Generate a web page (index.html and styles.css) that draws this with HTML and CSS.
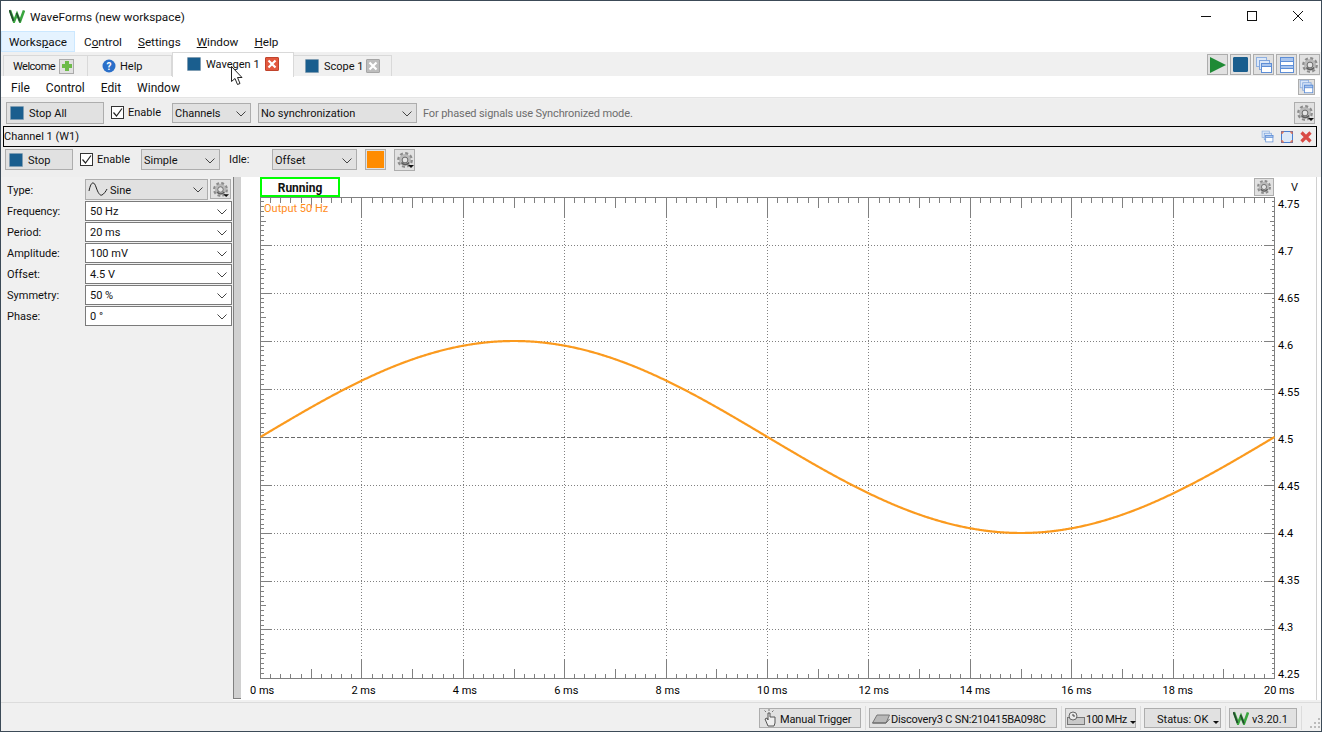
FILE: index.html
```html
<!DOCTYPE html>
<html>
<head>
  <title>WaveForms (new workspace)</title>
  <link rel="stylesheet" href="styles.css">
</head>
<body>
  <svg class="defs" width="0" height="0">
    <symbol id="logo" viewBox="0 0 16 14">
      <path d="M1 1.5 L5 12.5 L8 5 L11 12.5 L15 1.5" fill="none" stroke="#3aa63f" stroke-width="2.6"/>
      <path d="M0.5 1 L4.5 12 M7.5 4 L11 12.5" fill="none" stroke="#24492f" stroke-width="1.7"/>
    </symbol>
    <symbol id="gear" viewBox="0 0 18 18">
      <circle cx="9" cy="9" r="6" fill="#b9b9b9"/>
      <circle cx="9" cy="9" r="6.8" fill="none" stroke="#8c8c8c" stroke-width="2.2" stroke-dasharray="3 2.34"/>
      <circle cx="9" cy="9" r="2.9" fill="#e4e4e4" stroke="#6a6a6a"/>
      <path d="M5.5 11.5 A4.4 4.4 0 0 0 13 11.5" fill="none" stroke="#5c5c5c" stroke-width="1.5"/>
    </symbol>
    <symbol id="gear-menu" viewBox="0 0 18 18">
      <use href="#gear"/>
      <path d="M12 14 H18 L15 17 Z" fill="#111"/>
    </symbol>
    <symbol id="stack" viewBox="0 0 18 18">
      <rect x="1.5" y="1.5" width="10" height="9" fill="#dce8f8" stroke="#8fb0e0"/>
      <rect x="4.5" y="4.5" width="10" height="9" fill="#dce8f8" stroke="#7fa4dc"/>
      <rect x="6.5" y="7.5" width="10" height="9" fill="#fff" stroke="#5e8ed6"/>
      <rect x="6.5" y="7.5" width="10" height="3" fill="#a9c5ee" stroke="#5e8ed6"/>
    </symbol>
    <symbol id="chev" viewBox="0 0 10 6">
      <path d="M0.5 0.5 L5 5 L9.5 0.5" fill="none" stroke="#444" stroke-width="1"/>
    </symbol>
    <symbol id="x-mark" viewBox="0 0 10 10">
      <path d="M1.5 1.5 L8.5 8.5 M8.5 1.5 L1.5 8.5" fill="none" stroke="#fff" stroke-width="2.2"/>
    </symbol>
  </svg>

  <div class="window">
    <div class="titlebar">
      <svg class="logo"><use href="#logo"/></svg>
      <span class="title-text">WaveForms (new workspace)</span>
      <div class="win-controls">
        <svg width="46" height="30"><path d="M18 15.5 H28" stroke="#111"/></svg>
        <svg width="46" height="30"><rect x="18.5" y="10.5" width="9" height="9" fill="none" stroke="#111"/></svg>
        <svg width="46" height="30"><path d="M18 10 L28 20 M28 10 L18 20" stroke="#111"/></svg>
      </div>
    </div>

    <div class="menubar">
      <span class="menu-item active">Works<u>p</u>ace</span>
      <span class="menu-item">C<u>o</u>ntrol</span>
      <span class="menu-item"><u>S</u>ettings</span>
      <span class="menu-item"><u>W</u>indow</span>
      <span class="menu-item"><u>H</u>elp</span>
    </div>

    <div class="tabbar">
      <div class="tab tab-welcome">
        <span class="tab-label">Welcome</span>
        <span class="tab-box">
          <svg width="12" height="12"><path d="M6 1 V11 M1 6 H11" stroke="#6dbb4a" stroke-width="4"/></svg>
        </span>
      </div>
      <div class="tab tab-help">
        <svg width="14" height="14"><circle cx="7" cy="7" r="6.5" fill="#2a6fc9"/><text x="7" y="10.5" class="help-q">?</text></svg>
        <span>Help</span>
      </div>
      <div class="tab tab-wavegen current">
        <span class="square"></span>
        <span class="tab-label">Wavegen 1</span>
        <span class="tab-close red"><svg width="10" height="10"><use href="#x-mark"/></svg></span>
      </div>
      <div class="tab tab-scope">
        <span class="square"></span>
        <span class="tab-label">Scope 1</span>
        <span class="tab-close grey"><svg width="10" height="10"><use href="#x-mark"/></svg></span>
      </div>
      <div class="tab-tools">
        <button class="icon-btn"><svg width="16" height="16"><path d="M0 0 L16 8 L0 16 Z" fill="#1f8a35"/></svg></button>
        <button class="icon-btn"><span class="square big"></span></button>
        <button class="icon-btn"><svg width="18" height="18"><use href="#stack"/></svg></button>
        <button class="icon-btn">
          <svg width="14" height="16"><rect x="0.5" y="0.5" width="13" height="15" fill="#fff" stroke="#5e8ed6"/><rect x="0.5" y="0.5" width="13" height="4" fill="#a9c5ee" stroke="#5e8ed6"/><rect x="0.5" y="8.5" width="13" height="3" fill="#a9c5ee" stroke="#5e8ed6"/></svg>
        </button>
        <button class="icon-btn"><svg width="18" height="18"><use href="#gear"/></svg></button>
      </div>
    </div>

    <div class="submenu">
      <span>File</span>
      <span>Control</span>
      <span>Edit</span>
      <span>Window</span>
      <button class="icon-btn small"><svg width="15" height="15"><use href="#stack"/></svg></button>
    </div>

    <div class="toolbar">
      <button class="btn stop-all"><span class="square"></span>Stop All</button>
      <label class="check check-all"><span class="box"><svg width="11" height="11"><path d="M1.5 5.5 L4.5 9 L10 1.5" fill="none" stroke="#222" stroke-width="1.2"/></svg></span>Enable</label>
      <div class="combo combo-channels">Channels<svg class="chev"><use href="#chev"/></svg></div>
      <div class="combo combo-sync">No synchronization<svg class="chev"><use href="#chev"/></svg></div>
      <span class="hint">For phased signals use Synchronized mode.</span>
      <button class="icon-btn tall"><svg width="18" height="18"><use href="#gear-menu"/></svg></button>
    </div>

    <div class="channel-bar">
      <span>Channel 1 (W1)</span>
      <div class="channel-icons">
        <svg width="13" height="13"><use href="#stack"/></svg>
        <svg width="12" height="12"><rect x="0.5" y="0.5" width="11" height="11" fill="#dce8f8" stroke="#4a7fd0"/><path d="M1 3 V1 H3 M9 1 H11 V3 M11 9 V11 H9 M3 11 H1 V9" fill="none" stroke="#e2603c" stroke-width="1.2"/></svg>
        <svg width="12" height="12"><path d="M1.5 1.5 L10.5 10.5 M10.5 1.5 L1.5 10.5" stroke="#d94b45" stroke-width="3.2"/></svg>
      </div>
    </div>

    <div class="channel-tools">
      <button class="btn stop"><span class="square"></span>Stop</button>
      <label class="check check-one"><span class="box"><svg width="11" height="11"><path d="M1.5 5.5 L4.5 9 L10 1.5" fill="none" stroke="#222" stroke-width="1.2"/></svg></span>Enable</label>
      <div class="combo combo-mode">Simple<svg class="chev"><use href="#chev"/></svg></div>
      <span class="idle-label">Idle:</span>
      <div class="combo combo-idle">Offset<svg class="chev"><use href="#chev"/></svg></div>
      <button class="swatch-btn"><span class="swatch"></span></button>
      <button class="icon-btn tall"><svg width="18" height="18"><use href="#gear-menu"/></svg></button>
    </div>

    <div class="main">
      <div class="sidebar">
        <div class="type-row">
          <span>Type:</span>
          <div class="combo combo-type">
            <svg width="20" height="16"><path d="M1 10 C3 0 6 0 8 6 C10 12 12 15 14 14 C16 13 18 10 19 8" fill="none" stroke="#222"/></svg>
            <span>Sine</span>
            <svg class="chev"><use href="#chev"/></svg>
          </div>
          <button class="icon-btn type-gear"><svg width="17" height="17"><use href="#gear-menu"/></svg></button>
        </div>
        <div class="param"><span>Frequency:</span><div class="field">50 Hz<svg class="chev"><use href="#chev"/></svg></div></div>
        <div class="param"><span>Period:</span><div class="field">20 ms<svg class="chev"><use href="#chev"/></svg></div></div>
        <div class="param"><span>Amplitude:</span><div class="field">100 mV<svg class="chev"><use href="#chev"/></svg></div></div>
        <div class="param"><span>Offset:</span><div class="field">4.5 V<svg class="chev"><use href="#chev"/></svg></div></div>
        <div class="param"><span>Symmetry:</span><div class="field">50 %<svg class="chev"><use href="#chev"/></svg></div></div>
        <div class="param"><span>Phase:</span><div class="field">0 °<svg class="chev"><use href="#chev"/></svg></div></div>
      </div>
      <div class="splitter"></div>
      <div class="plot-pane">
        <div class="plot-head">
          <div class="running">Running</div>
          <button class="icon-btn plot-gear"><svg width="16" height="16"><use href="#gear"/></svg></button>
          <span class="unit">V</span>
        </div>
        <svg id="plot" class="plot" viewBox="241 197 1075 503" width="1075" height="503"></svg>
      </div>
    </div>

    <div class="statusbar">
      <button class="btn status-btn st-trigger">
        <svg width="14" height="18"><path d="M5 17 L2 10 L4 9 L5 11 V4 H7 V8 H12 V14 L11 17 Z" fill="#eee" stroke="#555"/><path d="M3 3 L1.5 1.5 M6 2 V0 M9 3 L10.5 1.5" stroke="#777"/></svg>
        <span class="status-text">Manual Trigger</span>
      </button>
      <i class="sep"></i>
      <button class="btn status-btn st-device">
        <svg width="18" height="12"><path d="M0.5 11 L5 3 H17.5 L14 11 Z" fill="#b9b9b9" stroke="#777"/><path d="M0.5 11 H14 L17.5 7" fill="none" stroke="#666"/></svg>
        <span class="status-text">Discovery3 C SN:210415BA098C</span>
      </button>
      <i class="sep"></i>
      <button class="btn status-btn st-clock">
        <svg width="18" height="14"><rect x="0.5" y="6.5" width="17" height="7" fill="#c9c9c9" stroke="#777"/><circle cx="6" cy="5" r="4" fill="#e8e8e8" stroke="#666"/><path d="M6 3 V5 H8" fill="none" stroke="#444"/></svg>
        <span class="status-text">100 MHz</span><b class="drop"></b>
      </button>
      <i class="sep"></i>
      <button class="btn status-btn st-state"><span class="status-text">Status: OK</span><b class="drop"></b></button>
      <i class="sep"></i>
      <button class="btn status-btn st-version"><svg class="logo"><use href="#logo"/></svg><span class="status-text">v3.20.1</span></button>
      <i class="sep"></i>
      <svg class="grip" width="10" height="10"><path d="M8 0h2v2H8zM4 4h2v2H4zM8 4h2v2H8zM0 8h2v2H0zM4 8h2v2H4zM8 8h2v2H8z" fill="#bbb"/></svg>
    </div>

    <svg class="cursor" width="14" height="20"><path d="M0.5 0.5 V15.5 L4 12.5 L6.5 18.5 L9 17.5 L6.5 11.5 H11 Z" fill="#fff" stroke="#222"/></svg>
  </div>

  <script src="plot.js"></script>
</body>
</html>
```

FILE: styles.css
```css
* {
  box-sizing: border-box;
}
body {
  margin: 0;
  font-family: Roboto, "Noto Sans", sans-serif;
  font-size: 11px;
  color: #111;
  background-color: #fff;
  overflow: hidden;
}
button {
  font: inherit;
  color: inherit;
  padding: 0;
}
svg {
  flex-shrink: 0;
}
.defs {
  position: absolute;
}
.window {
  position: relative;
  width: 1322px;
  height: 732px;
  border: 1px solid #3c4a57;
  display: flex;
  flex-direction: column;
  background-color: #f0f0f0;
}

/* title and menus */
.titlebar {
  height: 30px;
  background-color: #fff;
  display: flex;
  align-items: center;
  padding-left: 8px;
}
.logo {
  width: 16px;
  height: 14px;
}
.title-text {
  margin-left: 5px;
  padding-top: 2px;
  font-size: 11.8px;
}
.win-controls {
  margin-left: auto;
  display: flex;
}
.menubar {
  height: 21px;
  background-color: #fff;
  display: flex;
  align-items: center;
}
.menu-item {
  height: 21px;
  line-height: 22px;
  padding: 0 8px;
  font-size: 11.7px;
}
.menu-item.active {
  background-color: #e5f3ff;
  border: 1px solid #cce8ff;
  padding: 0 7px;
  line-height: 20px;
  margin-right: 1px;
}

/* tabs */
.tabbar {
  height: 24px;
  display: flex;
  padding-left: 2px;
  position: relative;
}
.tab {
  display: flex;
  align-items: center;
  border-right: 1px solid #d9d9d9;
  background-color: #f0f0f0;
  margin-top: 3px;
  border-top: 1px solid #d9d9d9;
  border-left: 1px solid #d9d9d9;
  height: 21px;
  white-space: nowrap;
}
.tab-label {
  flex-grow: 1;
}
.tab-welcome {
  width: 85px;
  padding-left: 9px;
  padding-right: 13px;
  letter-spacing: -0.5px;
}
.tab-help {
  width: 84px;
  padding-left: 14px;
  gap: 4px;
  border-left: 0;
}
.tab-wavegen {
  width: 122px;
  padding-left: 14px;
  padding-right: 14px;
}
.tab-scope {
  width: 98px;
  padding-left: 11px;
  padding-right: 11px;
  border-left: 0;
}
.tab.current {
  margin-top: 0;
  height: 25px;
  background-color: #fff;
  position: relative;
  z-index: 1;
  padding-bottom: 2px;
}
.help-q {
  font-size: 10px;
  font-weight: bold;
  fill: #fff;
  text-anchor: middle;
}
.tab-box {
  width: 15px;
  height: 15px;
  border: 1px solid #aaa;
  background-color: #e1e1e1;
  display: flex;
  align-items: center;
  justify-content: center;
}
.square {
  display: inline-block;
  width: 14px;
  height: 14px;
  background-color: #1a5e8e;
  border: 1px solid #7f9db3;
  border-radius: 1px;
}
.square.big {
  width: 15px;
  height: 15px;
  border-color: #1a5e8e;
}
.tab .square {
  margin-right: 5px;
}
.tab-close {
  width: 14px;
  height: 14px;
  border-radius: 1px;
  display: flex;
  align-items: center;
  justify-content: center;
}
.tab-close.red {
  background-color: #e2583e;
  border: 1px solid #c0432c;
}
.tab-close.grey {
  background-color: #bdbdbd;
  border: 1px solid #a5a5a5;
}
.tab-tools {
  margin-left: auto;
  margin-right: 1px;
  display: flex;
  gap: 2px;
  padding-top: 2px;
}
.icon-btn {
  width: 21px;
  height: 21px;
  background-color: #e1e1e1;
  border: 1px solid #adadad;
  display: flex;
  align-items: center;
  justify-content: center;
}
.icon-btn.small {
  width: 17px;
  height: 16px;
}
.icon-btn.tall {
  height: 22px;
}

/* inner menu */
.submenu {
  height: 22px;
  background-color: #fff;
  display: flex;
  align-items: center;
  padding-left: 10px;
  padding-right: 5px;
  padding-top: 2px;
  gap: 16px;
  font-size: 12px;
  border-bottom: 1px solid #e4e4e4;
  margin-right: 1px;
}
.submenu .icon-btn {
  margin-left: auto;
  margin-top: -2px;
}

/* toolbars */
.toolbar {
  height: 27px;
  margin-top: 1px;
  display: flex;
  align-items: center;
  padding-left: 5px;
  background-color: #eee;
}
.btn {
  background-color: #e1e1e1;
  border: 1px solid #adadad;
  display: flex;
  align-items: center;
}
.stop-all {
  width: 98px;
  height: 22px;
  padding: 2px 0 0 3px;
  gap: 5px;
}
.btn .square {
  margin-top: -2px;
}
.check {
  display: flex;
  align-items: center;
  gap: 4px;
}
.box {
  width: 13px;
  height: 13px;
  border: 1px solid #333;
  background-color: #fff;
  display: flex;
  align-items: center;
  justify-content: center;
}
.check-all {
  margin-left: 7px;
  width: 61px;
}
.combo {
  height: 20px;
  background-color: #e1e1e1;
  border: 1px solid #adadad;
  display: flex;
  align-items: center;
  padding: 2px 0 0 2px;
}
.chev {
  width: 10px;
  height: 6px;
  margin-left: auto;
  margin-right: 4px;
}
.combo-channels {
  width: 79px;
}
.combo-sync {
  width: 159px;
  margin-left: 7px;
}
.hint {
  margin-left: 6px;
  padding-top: 2px;
  color: #6d6d6d;
  letter-spacing: -0.12px;
}
.toolbar .icon-btn {
  margin-left: auto;
  margin-right: 6px;
}
.channel-bar {
  height: 21px;
  margin-left: 2px;
  margin-right: 4px;
  border: 1px solid #000;
  display: flex;
  align-items: center;
  background-color: #eee;
}
.channel-icons {
  margin-left: auto;
  margin-right: 4px;
  display: flex;
  align-items: center;
  gap: 7px;
}
.channel-tools {
  height: 30px;
  display: flex;
  align-items: flex-start;
  padding-left: 4px;
  padding-top: 2px;
  background-color: #eee;
}
.channel-tools > * {
  height: 21px;
}
.channel-tools .idle-label {
  line-height: 21px;
}
.stop {
  width: 68px;
  padding: 2px 0 0 3px;
  gap: 5px;
}
.check-one {
  margin-left: 7px;
  width: 61px;
}
.combo-mode {
  width: 79px;
}
.idle-label {
  margin-left: 9px;
  width: 43px;
}
.combo-idle {
  width: 85px;
}
.swatch-btn {
  width: 21px;
  margin-left: 8px;
  border: 1px solid #adadad;
  background-color: #e1e1e1;
  display: flex;
  align-items: center;
  justify-content: center;
}
.swatch {
  width: 17px;
  height: 17px;
  background-color: #ff8c00;
}
.channel-tools .icon-btn {
  margin-left: 8px;
}

/* main area */
.main {
  height: 523px;
  display: flex;
  background-color: #fff;
}
.sidebar {
  width: 232px;
  background-color: #f0f0f0;
  padding: 1px 0 0 6px;
}
.type-row {
  display: grid;
  grid-template-columns: 78px 123px 21px;
  align-items: center;
  height: 22px;
}
.type-row > span,
.param > span {
  padding-top: 2px;
}
.combo-type {
  height: 21px;
  gap: 2px;
}
.combo-type svg:first-child {
  margin-top: -2px;
}
.type-gear {
  margin-left: 2px;
  height: 20px;
}
.param {
  display: grid;
  grid-template-columns: 78px 147px;
  height: 21px;
  align-items: center;
}
.field {
  height: 20px;
  background-color: #fff;
  border: 1px solid #7a7a7a;
  display: flex;
  align-items: center;
  padding: 2px 0 0 4px;
}
.splitter {
  width: 8px;
  height: 522px;
  background-color: #d0d0d0;
  border: 1px solid #808080;
  border-top: 0;
  border-right: 0;
}
.plot-pane {
  width: 1076px;
  border-right: 1px solid #d0d0d0;
}
.plot-head {
  height: 20px;
  display: flex;
  align-items: flex-start;
  padding-left: 19px;
}
.running {
  width: 80px;
  height: 20px;
  line-height: 18px;
  border: 2px solid #00ff00;
  text-align: center;
  font-weight: bold;
  font-size: 12px;
}
.plot-gear {
  margin-left: 914px;
  margin-top: 1px;
  width: 20px;
  height: 18px;
}
.unit {
  margin-left: 17px;
  line-height: 22px;
}
.plot {
  display: block;
  font-family: Roboto, "Noto Sans", sans-serif;
  font-size: 11px;
}
.frame,
.tick {
  fill: none;
  stroke: #808080;
  shape-rendering: crispEdges;
}
.grid {
  fill: none;
  stroke: #808080;
  stroke-dasharray: 1 2;
  shape-rendering: crispEdges;
}
.zero {
  fill: none;
  stroke: #6a6a6a;
  stroke-dasharray: 4 2;
  shape-rendering: crispEdges;
}
.wave {
  fill: none;
  stroke: #fb9a1e;
  stroke-width: 2.2;
}
.output {
  fill: #ff8c1a;
}

/* status bar */
.statusbar {
  height: 29px;
  margin-top: 2px;
  border-top: 1px solid #dcdcdc;
  display: flex;
  align-items: flex-start;
  padding: 5px 0 0 752px;
}
.status-btn {
  height: 20px;
  justify-content: flex-start;
  gap: 3px;
  white-space: nowrap;
}
.status-text {
  padding-top: 2px;
}
.sep {
  width: 1px;
  height: 24px;
  margin: -2px 3px 0 4px;
  background-color: #dcdcdc;
}
.st-trigger {
  width: 102px;
  padding-left: 3px;
  margin-left: 6px;
}
.st-trigger .status-text {
  letter-spacing: -0.15px;
}
.st-device {
  width: 188px;
  padding-left: 2px;
  gap: 1px;
}
.st-device .status-text {
  letter-spacing: -0.2px;
}
.st-clock {
  width: 71px;
  padding-left: 1px;
  gap: 1px;
}
.st-clock .status-text {
  letter-spacing: -0.5px;
}
.st-state {
  width: 77px;
  padding-left: 12px;
}
.st-version {
  width: 68px;
  padding-left: 3px;
}
.drop {
  width: 0;
  height: 0;
  border-left: 3px solid transparent;
  border-right: 3px solid transparent;
  border-top: 3px solid #111;
  margin-top: 8px;
  margin-left: 2px;
}
.grip {
  margin-left: auto;
  margin-right: 1px;
  margin-top: 10px;
}
.cursor {
  position: absolute;
  left: 230px;
  top: 65px;
  z-index: 2;
}
```

FILE: plot.js
```js
var NS = 'http://www.w3.org/2000/svg';
var plot = document.getElementById('plot');

var left = 260.5, right = 1274.5, top_ = 197, bottom = 678;
var stepX = (right - left) / 10;
var stepY = (bottom - top_) / 10;

function add(tag, attrs, text) {
  var el = document.createElementNS(NS, tag);
  for (var k in attrs) el.setAttribute(k, attrs[k]);
  if (text) el.textContent = text;
  plot.appendChild(el);
}

function px(v) {
  return Math.floor(v) + 0.5;
}

var ticks = '', grid = '';
var l = px(left), r = px(right), t0 = px(top_), b = px(bottom);
for (var i = 0; i <= 100; i++) {
  // ticks run along all four sides, 10 per division
  var x = px(left + i * stepX / 10);
  var y = px(top_ + i * stepY / 10);
  var lenX = i % 10 == 0 ? 20 : (i % 5 == 0 ? 10 : 5);
  var lenY = i % 10 == 0 ? 10 : (i % 5 == 0 ? 5 : 3);
  ticks += 'M' + x + ' ' + t0 + 'v' + lenX;
  ticks += 'M' + x + ' ' + b + 'v-' + lenX;
  ticks += 'M' + l + ' ' + y + 'h' + lenY;
  ticks += 'M' + r + ' ' + y + 'h-' + lenY;
}
for (var n = 1; n < 10; n++) {
  grid += 'M' + px(left + n * stepX) + ' ' + (top_ + 20) + 'V' + (bottom - 20);
  if (n != 5) grid += 'M' + (l + 10) + ' ' + px(top_ + n * stepY) + 'H' + (r - 10);
}
add('path', { d: grid, 'class': 'grid' });
add('path', { d: 'M' + l + ' ' + px(top_ + 5 * stepY) + 'H' + r, 'class': 'zero' });
add('path', { d: ticks, 'class': 'tick' });
add('rect', { x: l, y: t0, width: r - l, height: b - t0, 'class': 'frame' });

// 50 Hz sine, 100 mV amplitude around 4.5 V
var pts = [];
for (var p = 0; p <= r - l; p++) {
  pts.push((l + p) + ',' + (437 - 96 * Math.sin(2 * Math.PI * p / (r - l))).toFixed(2));
}
add('polyline', { points: pts.join(' '), 'class': 'wave' });

add('text', { x: 264, y: 212, 'class': 'output' }, 'Output 50 Hz');

for (var t = 0; t <= 10; t++) {
  add('text', { x: 261 + t * 101.4 - 11, y: 694 }, (t * 2) + ' ms');
}
// the value labels are spaced a little tighter than the grid so both ends fit
var volts = ['4.75', '4.7', '4.65', '4.6', '4.55', '4.5', '4.45', '4.4', '4.35', '4.3', '4.25'];
for (var v = 0; v <= 10; v++) {
  add('text', { x: 1278, y: 208 + v * 47 }, volts[v]);
}
```
